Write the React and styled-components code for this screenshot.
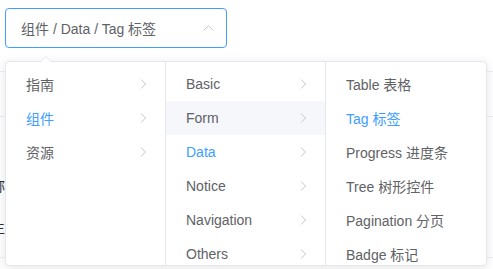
import styled, { createGlobalStyle } from "styled-components";

const GlobalStyle = createGlobalStyle`
  html, body {
    margin: 0;
    padding: 0;
    background: #fff;
  }
  body {
    font-family: "Helvetica Neue", Helvetica, "Liberation Sans", "Noto Sans CJK SC", Arial, sans-serif;
    -webkit-font-smoothing: antialiased;
  }
`;

const columns = [
  {
    items: ["指南", "组件", "资源"],
    active: "组件",
    arrow: true,
  },
  {
    items: ["Basic", "Form", "Data", "Notice", "Navigation", "Others"],
    active: "Data",
    hover: "Form",
    arrow: true,
  },
  {
    items: [
      "Table 表格",
      "Tag 标签",
      "Progress 进度条",
      "Tree 树形控件",
      "Pagination 分页",
      "Badge 标记",
    ],
    active: "Tag 标签",
    arrow: false,
  },
];

const Stage = styled.div`
  position: relative;
  width: 493px;
  height: 269px;
  overflow: hidden;
  padding: 8px 0 0 5px;
  box-sizing: border-box;
`;

const Input = styled.div`
  width: 222px;
  height: 40px;
  box-sizing: border-box;
  border: 1px solid #409eff;
  border-radius: 4px;
  display: flex;
  align-items: center;
  padding: 0 12px 0 15px;
  font-size: 14px;
  color: #606266;
`;

const InputText = styled.span`
  flex: 1;
`;

const Backdrop = styled.div`
  margin: 23px 0 0 -5px;
`;

const BackRow = styled.div`
  height: ${(p) => p.h}px;
  box-sizing: border-box;
  border-top: 1px solid #ebeef5;
  display: flex;
  flex-direction: column;
  padding-top: ${(p) => p.pt || 0}px;
  gap: 24px;
`;

const CutLabel = styled.div`
  width: 5px;
  height: 18px;
  line-height: 18px;
  overflow: hidden;
  direction: rtl;
  white-space: nowrap;
  font-size: 14px;
  color: #303133;
`;

const Dropdown = styled.div`
  position: absolute;
  top: 61px;
  left: 5px;
  display: flex;
  background: #fff;
  border: 1px solid #e4e7ed;
  border-radius: 4px;
  box-shadow: 0 2px 12px 0 rgba(0, 0, 0, 0.1);
`;

const PopArrow = styled.div`
  position: absolute;
  top: -6px;
  left: 34px;
  width: 0;
  height: 0;
  border: 6px solid transparent;
  border-top-width: 0;
  border-bottom-color: #e4e7ed;
  &::after {
    content: "";
    position: absolute;
    top: 1px;
    left: -6px;
    border: 6px solid transparent;
    border-top-width: 0;
    border-bottom-color: #fff;
  }
`;

const Menu = styled.div`
  width: 160px;
  height: 203px;
  box-sizing: border-box;
  overflow: hidden;
  padding: 5px 0;
  border-right: ${(p) => (p.last ? "none" : "1px solid #e4e7ed")};
`;

const Item = styled.div`
  height: 34px;
  display: flex;
  align-items: center;
  padding: 0 18px 0 20px;
  font-size: 14px;
  color: ${(p) => (p.active ? "#409eff" : "#606266")};
  background: ${(p) => (p.hover ? "#f5f7fa" : "transparent")};
`;

const Label = styled.span`
  flex: 1;
  white-space: nowrap;
`;

const ChevronRight = () => (
  <svg width="7" height="10" viewBox="0 0 7 10">
    <polyline points="1,0.5 5.5,5 1,9.5" fill="none" stroke="#c0c4cc" strokeWidth="1" />
  </svg>
);

const ChevronUp = () => (
  <svg width="11" height="6" viewBox="0 0 11 6">
    <polyline points="0.5,5.5 5.5,0.8 10.5,5.5" fill="none" stroke="#c0c4cc" strokeWidth="1" />
  </svg>
);

export default function App() {
  return (
    <>
      <GlobalStyle />
      <Stage>
        <Input>
          <InputText>组件 / Data / Tag 标签</InputText>
          <ChevronUp />
        </Input>
        <Backdrop>
          <BackRow h={45} />
          <BackRow h={141} pt={60}>
            <CutLabel>名称：</CutLabel>
            <CutLabel>生</CutLabel>
          </BackRow>
          <BackRow h={20} />
        </Backdrop>
        <Dropdown>
          <PopArrow />
          {columns.map((col, i) => (
            <Menu key={i} last={i === columns.length - 1}>
              {col.items.map((it) => (
                <Item key={it} active={it === col.active} hover={it === col.hover}>
                  <Label>{it}</Label>
                  {col.arrow && <ChevronRight />}
                </Item>
              ))}
            </Menu>
          ))}
        </Dropdown>
      </Stage>
    </>
  );
}
